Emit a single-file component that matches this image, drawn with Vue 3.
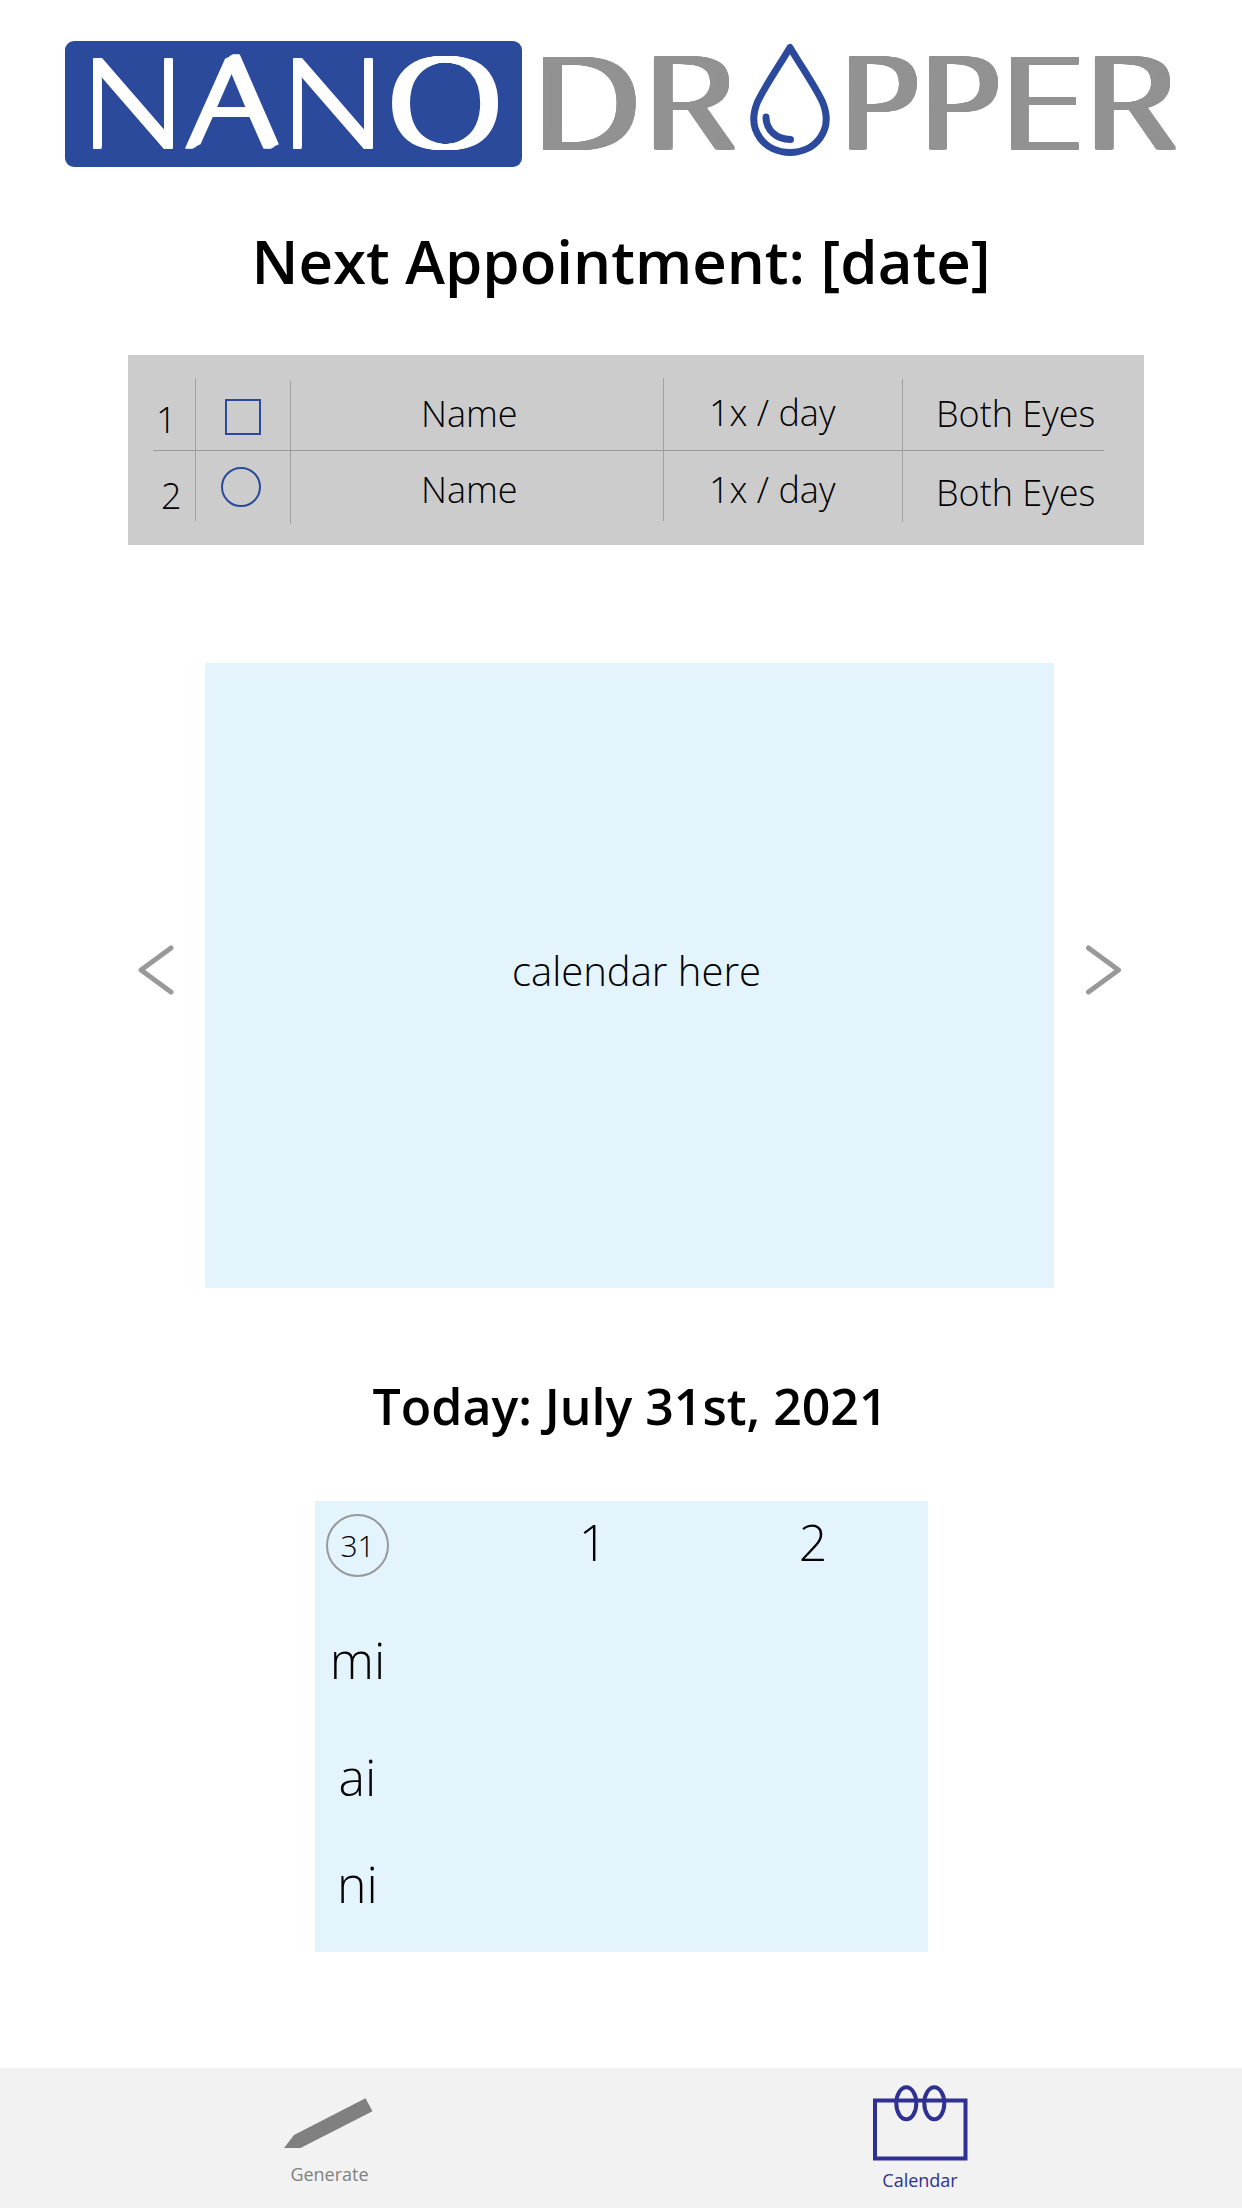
<script setup>
import { ref, onMounted } from 'vue'

// Wordmark letters: width of the drawn letter, gap before it, and how far
// its strokes are thickened sideways (spread) and upwards (rise).
const nano = [
  { c: 'N', w: 80, h: 91.5, gap: 28, spread: 1, rise: 8 },
  { c: 'A', w: 95, h: 93, gap: 12, spread: 8, rise: 4, slanted: true },
  { c: 'N', w: 80, h: 91.5, gap: 13, spread: 1, rise: 8 },
  { c: 'O', w: 107, h: 91, gap: 19, spread: 10, rise: 0 },
]
const dr = [
  { c: 'D', w: 93, h: 92.5, gap: 21, spread: 11, rise: 2 },
  { c: 'R', w: 82, h: 92.5, gap: 18, spread: 11, rise: 2 },
]
const pper = [
  { c: 'P', w: 68, h: 92.5, gap: 18, spread: 11, rise: 2 },
  { c: 'P', w: 69, h: 92.5, gap: 12, spread: 11, rise: 2 },
  { c: 'E', w: 68, h: 92.5, gap: 13, spread: 10, rise: 2 },
  { c: 'R', w: 82, h: 92.5, gap: 16, spread: 11, rise: 2 },
]
const CAP_HEIGHT = 92.8

const ready = ref(false)
let ctx = null

function boxStyle(l) {
  return { width: l.w + 'px', marginLeft: l.gap + 'px' }
}

function glyphStyle(l) {
  if (!ready.value) return {}
  ctx.font = '300 130px "Open Sans"'
  const m = ctx.measureText(l.c)
  const left = -m.actualBoundingBoxLeft
  const ink = m.actualBoundingBoxRight - left
  const sx = (l.w - l.spread) / ink
  const sy = (l.h - l.rise) / CAP_HEIGHT
  const shadows = []
  const add = (x, y) => shadows.push(`${(x / sx).toFixed(2)}px ${(-y / sy).toFixed(2)}px currentColor`)
  if (l.slanted) {
    for (let i = 1; i <= l.spread; i++) add(i, (i * l.rise) / l.spread)
  } else {
    for (let y = 0; y <= l.rise; y++) {
      for (let x = 0; x <= l.spread; x++) if (x || y) add(x, y)
    }
  }
  return {
    transform: `translateX(${(-left * sx).toFixed(2)}px) scale(${sx.toFixed(4)}, ${sy.toFixed(4)})`,
    textShadow: shadows.join(', '),
  }
}

onMounted(() => {
  ctx = document.createElement('canvas').getContext('2d')
  ready.value = true
})
</script>

<template>
  <div class="screen">
    <header class="logo">
      <div class="nano">
        <span v-for="(l, i) in nano" :key="i" class="letter" :style="boxStyle(l)"><span class="glyph" :style="glyphStyle(l)">{{ l.c }}</span></span>
      </div>
      <div class="dropper">
        <span v-for="(l, i) in dr" :key="i" class="letter" :style="boxStyle(l)"><span class="glyph" :style="glyphStyle(l)">{{ l.c }}</span></span>
        <svg class="drop" width="82" height="114" viewBox="0 0 82 114" fill="none" stroke="#2b4a9c" stroke-linecap="round" stroke-linejoin="round">
          <path d="M41 4.500C32 20 16.500 42 8.500 59C-3.500 88 16.500 109.500 41 109.500S85.500 88 73.500 59C65.500 42 50 20 41 4.500Z" stroke-width="7" />
          <path d="M17 74C17 87 27.500 96.500 41.500 96.500" stroke-width="7" />
        </svg>
        <span v-for="(l, i) in pper" :key="i" class="letter" :style="boxStyle(l)"><span class="glyph" :style="glyphStyle(l)">{{ l.c }}</span></span>
      </div>
    </header>

    <h1 class="next">Next Appointment: [date]</h1>

    <section class="meds">
      <div class="col num"><span>1</span><span class="second">2</span></div>
      <div class="col mark"><i class="square"></i><i class="circle"></i></div>
      <div class="col name"><span>Name</span><span>Name</span></div>
      <div class="col freq"><span>1x / day</span><span>1x / day</span></div>
      <div class="col eyes"><span>Both Eyes</span><span>Both Eyes</span></div>
      <div class="rule"></div>
    </section>

    <section class="calendar">
      <svg class="arrow" width="38" height="52" viewBox="0 0 38 52"><path d="M35 4L5 26L35 48" /></svg>
      <div class="month"><span>calendar here</span></div>
      <svg class="arrow" width="38" height="52" viewBox="0 0 38 52"><path d="M4.500 4L34.500 26L4.500 48" /></svg>
    </section>

    <h2 class="today">Today: July 31st, 2021</h2>

    <section class="days">
      <div class="day current">
        <div class="badge">31</div>
        <span class="mi">mi</span>
        <span class="ai">ai</span>
        <span class="ni">ni</span>
      </div>
      <div class="day">1</div>
      <div class="day">2</div>
    </section>

    <nav class="tabs">
      <div class="tab generate">
        <svg width="92" height="54" viewBox="0 0 92 54"><path d="M0 50L10 37L81.500 .2L88.500 13.200L16.500 50Z" fill="#808080" /></svg>
        <span>Generate</span>
      </div>
      <div class="tab cal">
        <svg width="96" height="78" viewBox="0 0 96 78" fill="none" stroke="#2e3192" stroke-width="4">
          <rect x="3" y="15.500" width="90.500" height="58" />
          <ellipse cx="34.300" cy="18.300" rx="10" ry="16" />
          <ellipse cx="62.300" cy="18.300" rx="10" ry="16" />
        </svg>
        <span>Calendar</span>
      </div>
    </nav>
  </div>
</template>

<style>
body {
  margin: 0;
  background: #fff;
}
</style>

<style scoped>
.screen {
  box-sizing: border-box;
  display: flex;
  flex-direction: column;
  width: 1242px;
  height: 2208px;
  overflow: hidden;
  background: #fff;
  color: #000;
  font-family: "Open Sans", "Noto Sans", sans-serif;
  font-weight: 300;
}
.logo {
  display: flex;
  height: 126px;
  margin: 41px 0 0 65px;
  font-size: 130px;
  line-height: 126px;
}
.nano {
  display: flex;
  width: 457px;
  border-radius: 9px;
  background: #2b4a9c;
  color: #fff;
  line-height: 115px;
}
.dropper {
  display: flex;
  color: #929292;
  line-height: 118px;
}
.letter {
  flex: none;
  white-space: nowrap;
}
.glyph {
  display: inline-block;
  transform-origin: 0 108px;
}
.dropper .glyph {
  transform-origin: 0 109px;
}
.drop {
  flex: none;
  margin: 2px 0 0 13px;
}
.next {
  margin: 54px 0 0;
  font-size: 60px;
  font-weight: 600;
  line-height: 80px;
  text-align: center;
}
.meds {
  position: relative;
  box-sizing: border-box;
  display: flex;
  flex: none;
  width: 1016px;
  height: 190px;
  margin: 54px 0 0 128px;
  padding: 23px 0 0 25px;
  background: #ccc;
  font-size: 36px;
  line-height: 50px;
}
.col {
  box-sizing: border-box;
  display: flex;
  flex-direction: column;
  height: 143px;
  border-right: 1px solid #a0a0a0;
}
.num {
  width: 43px;
  padding: 17px 0 0 3px;
  gap: 26px;
}
.second {
  padding-left: 5px;
}
.mark {
  width: 95px;
  margin-top: 3px;
  padding: 18px 0 0 25px;
  gap: 32px;
}
.square {
  box-sizing: border-box;
  width: 36px;
  height: 36px;
  margin-left: 4px;
  border: 2px solid #2b4a9c;
}
.circle {
  box-sizing: border-box;
  width: 40px;
  height: 40px;
  border: 2px solid #2b4a9c;
  border-radius: 50%;
}
.name {
  width: 373px;
  padding: 11px 0 0 130px;
  gap: 26px;
}
.freq {
  width: 239px;
  margin-top: 1px;
  padding: 9px 0 0 45px;
  gap: 27px;
}
.eyes {
  border: 0;
  padding: 11px 0 0 33px;
  gap: 29px;
}
.rule {
  position: absolute;
  top: 95px;
  left: 25px;
  width: 951px;
  height: 1px;
  background: #999;
}
.calendar {
  display: flex;
  flex: none;
  align-items: center;
  height: 625px;
  margin: 118px 0 0 136px;
}
.arrow {
  flex: none;
  margin-top: -12px;
  fill: none;
  stroke: #999;
  stroke-width: 5;
  stroke-linecap: round;
  stroke-linejoin: round;
}
.month {
  box-sizing: border-box;
  width: 849px;
  height: 625px;
  margin: 0 30px 0 31px;
  padding: 283px 0 0 14px;
  background: #e3f4fd;
  font-size: 40px;
  line-height: 50px;
  text-align: center;
}
.today {
  margin: 86px 0 0 18px;
  font-size: 50px;
  font-weight: 600;
  line-height: 64px;
  text-align: center;
}
.days {
  display: flex;
  flex: none;
  width: 613px;
  height: 451px;
  margin: 63px 0 0 315px;
  background: #e3f4fd;
  font-size: 50px;
  line-height: 60px;
}
.day {
  width: 220px;
  padding-top: 11px;
  text-align: center;
}
.current {
  display: flex;
  flex-direction: column;
  align-items: center;
  width: 63px;
  padding: 13px 94px 0 11px;
}
.badge {
  box-sizing: border-box;
  flex: none;
  width: 63px;
  height: 63px;
  border: 2px solid #999;
  border-radius: 50%;
  font-size: 30px;
  line-height: 60px;
}
.mi {
  margin-top: 53px;
}
.ai {
  margin-top: 57px;
}
.ni {
  margin-top: 47px;
}
.tabs {
  display: flex;
  flex: none;
  height: 140px;
  margin-top: auto;
  background: #f2f2f2;
  font-size: 18px;
  font-weight: 400;
  line-height: 24px;
}
.tab {
  display: flex;
  flex-direction: column;
  align-items: center;
}
.generate {
  width: 659px;
  padding-top: 30px;
  color: #808080;
}
.generate span {
  margin-top: 10px;
}
.cal {
  width: 522px;
  padding-top: 17px;
  color: #2e3192;
}
.cal span {
  margin-top: 5px;
}
</style>
